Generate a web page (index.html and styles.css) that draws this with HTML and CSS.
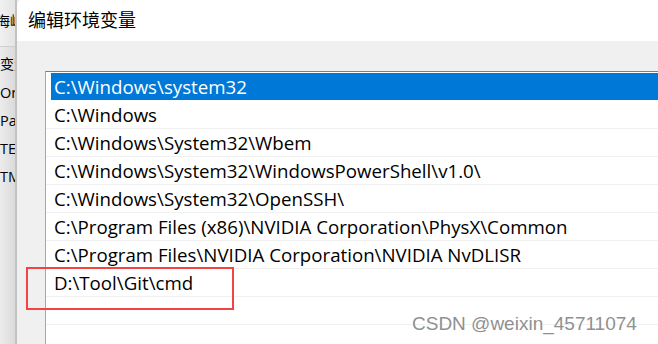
FILE: index.html
```html
<!DOCTYPE html>
<html lang="zh-CN">
<head>
  <meta charset="UTF-8" />
  <meta name="viewport" content="width=device-width, initial-scale=1.0"/>
  <title>编辑环境变量</title>
  <link rel="stylesheet" href="styles.css">
</head>
<body>

  <div class="screen">
    <div class="bgwin">
      <div class="bg-title">海峙</div>
      <div class="bg-head">变量</div>
      <div class="bg-row">On</div>
      <div class="bg-row">Pat</div>
      <div class="bg-row">TEI</div>
      <div class="bg-row">TM</div>
    </div>

    <div class="dialog">
      <div class="titlebar">编辑环境变量</div>
      <div class="body">
        <div class="listbox">
          <div class="row selected"><span class="cell">C:\Windows\system32</span></div>
          <div class="row"><span class="cell">C:\Windows</span></div>
          <div class="row"><span class="cell">C:\Windows\System32\Wbem</span></div>
          <div class="row"><span class="cell">C:\Windows\System32\WindowsPowerShell\v1.0\</span></div>
          <div class="row"><span class="cell">C:\Windows\System32\OpenSSH\</span></div>
          <div class="row"><span class="cell">C:\Program Files (x86)\NVIDIA Corporation\PhysX\Common</span></div>
          <div class="row"><span class="cell">C:\Program Files\NVIDIA Corporation\NVIDIA NvDLISR</span></div>
          <div class="row"><span class="cell">D:\Tool\Git\cmd</span></div>
          <div class="row"><span class="cell"></span></div>
          <div class="row"><span class="cell"></span></div>
        </div>
      </div>
    </div>
  </div>

  <div class="mark"></div>
  <div class="watermark">CSDN @weixin_45711074</div>

</body>
</html>
```

FILE: styles.css
```css
body {
  margin: 0;
  width: 658px;
  height: 344px;
  overflow: hidden;
  font-family: "Open Sans", "Noto Sans CJK SC", sans-serif;
  color: #000;
  background: #f0f0f0;
}
.screen {
  display: flex;
  height: 344px;
}
.bgwin {
  width: 15px;
  flex-shrink: 0;
  overflow: hidden;
  white-space: nowrap;
  border-right: 2px solid #c2c2c2;
  background: linear-gradient(to right, #ececec, #dadada);
  font-family: "Noto Sans CJK SC", sans-serif;
  font-size: 14px;
}
.bg-title {
  height: 46px;
  line-height: 40px;
  margin-left: -4px;
  border-bottom: 1px solid #cfcfcf;
  background: linear-gradient(to right, #f4f4f4, #e4e4e4);
}
.bg-head {
  height: 32px;
  line-height: 32px;
}
.bg-row {
  height: 28px;
  line-height: 28px;
  font-family: "Open Sans", sans-serif;
  font-size: 14.5px;
}
.dialog {
  flex: 1;
  display: flex;
  flex-direction: column;
  border-top-left-radius: 5px;
  overflow: hidden;
  background: #f0f0f0;
}
.titlebar {
  height: 41px;
  flex-shrink: 0;
  background: #fff;
  padding-left: 11px;
  line-height: 38px;
  font-family: "Noto Sans CJK SC", sans-serif;
  font-size: 18px;
}
.body {
  flex: 1;
  padding: 30px 0 0 28px;
}
.listbox {
  height: 100%;
  background: #fff;
  border-top: 1px solid #7f7f7f;
  border-left: 1px solid #a8a8a8;
  padding-top: 1px;
}
.row {
  height: 27px;
  border-bottom: 1px solid #f0f0f0;
  display: flex;
}
.cell {
  flex: 1;
  margin-left: 5px;
  padding-left: 3px;
  line-height: 27px;
  font-size: 18.7px;
  white-space: nowrap;
}
.selected {
  border-bottom-color: #fff;
}
.selected .cell {
  background: #0078d7;
  color: #fff;
}
.mark {
  position: absolute;
  left: 26px;
  top: 267px;
  width: 204px;
  height: 39px;
  border: 2px solid #f24444;
}
.watermark {
  position: absolute;
  left: 412px;
  top: 313px;
  font-family: "Liberation Sans", sans-serif;
  font-size: 19px;
  color: #909090;
  text-shadow: 0 0 1px #fff, 0 0 2px #fff;
}
```
